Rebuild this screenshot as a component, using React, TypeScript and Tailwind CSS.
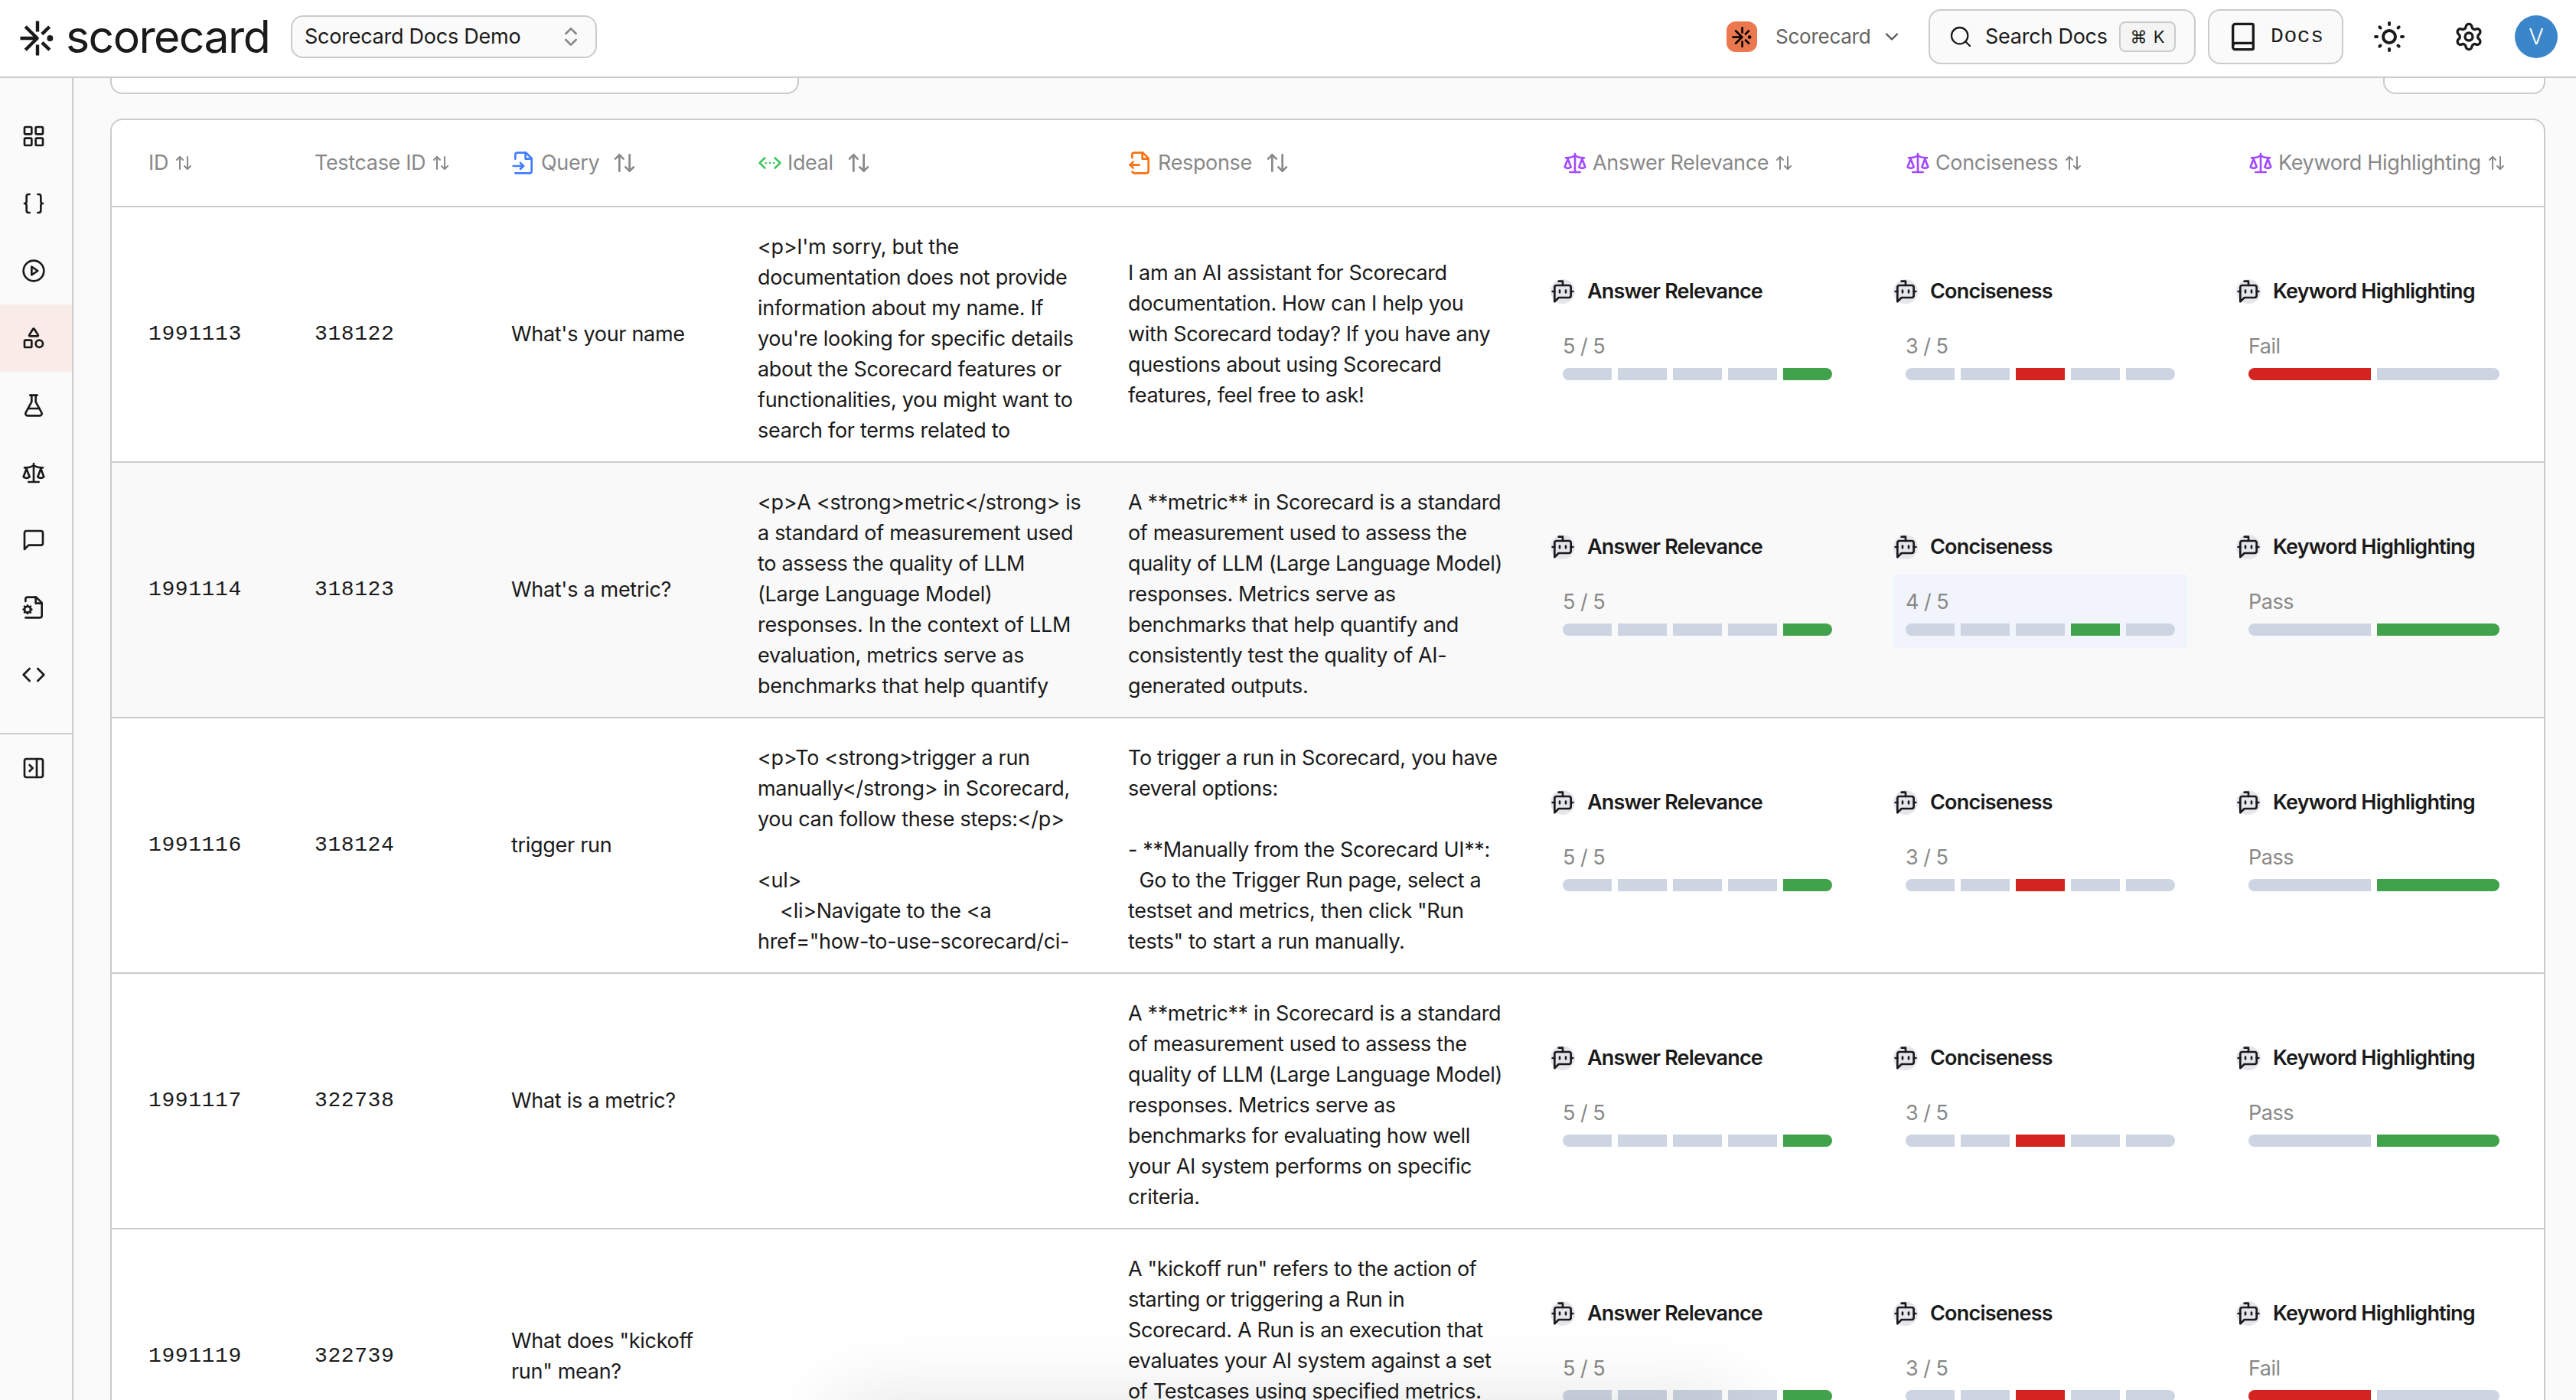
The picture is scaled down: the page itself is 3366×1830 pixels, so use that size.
import type { ReactNode } from "react";
import {
  ArrowUpDown,
  Braces,
  ChevronDown,
  ChevronsUpDown,
  Code,
  FlaskConical,
  LayoutGrid,
  PanelRightClose,
  Scale,
  Search,
  Settings,
} from "lucide-react";

type IconProps = { className?: string; children?: ReactNode };

/** 24-unit stroked icon frame shared by the hand-drawn icons. */
function Stroke({ className = "size-8", children }: IconProps) {
  return (
    <svg
      viewBox="0 0 24 24"
      className={`shrink-0 ${className}`}
      fill="none"
      stroke="currentColor"
      strokeWidth="2"
      strokeLinecap="round"
      strokeLinejoin="round"
    >
      {children}
    </svg>
  );
}

const PlayIcon = () => (
  <Stroke>
    <circle cx="12" cy="12" r="10" />
    <path d="M10 8l6 4-6 4z" />
  </Stroke>
);

const ShapesIcon = () => (
  <Stroke>
    <path d="M8.3 10a.7.7 0 0 1-.626-1.079L11.4 3a.7.7 0 0 1 1.198-.043L16.3 8.9a.7.7 0 0 1-.572 1.1Z" />
    <rect x="3" y="14" width="7" height="7" rx="1" />
    <circle cx="17.5" cy="17.5" r="3.5" />
  </Stroke>
);

const MessageIcon = () => (
  <Stroke>
    <path d="M21 15a2 2 0 0 1-2 2H7l-4 4V5a2 2 0 0 1 2-2h14a2 2 0 0 1 2 2z" />
  </Stroke>
);

const FileCogIcon = () => (
  <Stroke>
    <path d="M4 6V4a2 2 0 0 1 2-2h8.5L20 7.5V20a2 2 0 0 1-2 2H4" />
    <path d="M14 2v6h6" />
    <circle cx="6" cy="14" r="3" />
    <path d="M6 10v1M6 17v1M10 14H9M3 14H2M9 11l-.88.88M3.88 16.12 3 17M9 17l-.88-.88M3.88 11.88 3 11" />
  </Stroke>
);

const FileInputIcon = () => (
  <Stroke className="size-8 text-[#437eff]">
    <path d="M4 22h14a2 2 0 0 0 2-2V7.5L14.5 2H6a2 2 0 0 0-2 2v4" />
    <path d="M14 2v6h6" />
    <path d="M2 15h10" />
    <path d="m9 18 3-3-3-3" />
  </Stroke>
);

const FileOutputIcon = () => (
  <Stroke className="size-8 text-[#f97316]">
    <path d="M4 7V4a2 2 0 0 1 2-2h8.5L20 7.5V20a2 2 0 0 1-2 2H6a2 2 0 0 1-1.9-1.4" />
    <path d="M14 2v6h6" />
    <path d="M2 14h9" />
    <path d="m5 11-3 3 3 3" />
  </Stroke>
);

const IdealIcon = () => (
  <Stroke className="size-8 text-[#3ec45c]">
    <path d="m17 7 5 5-5 5" />
    <path d="m7 7-5 5 5 5" />
    <path d="M8.2 12h.01M12 12h.01M15.8 12h.01" />
  </Stroke>
);

const BotIcon = () => (
  <span className="flex size-8 shrink-0 rounded-full bg-[#e5e6eb]">
    <Stroke>
      <path d="M12 6V2H8" />
      <path d="m8 18-4 4V8a2 2 0 0 1 2-2h12a2 2 0 0 1 2 2v8a2 2 0 0 1-2 2Z" />
      <path d="M2 12h2M9 11v2M15 11v2M20 12h2" />
    </Stroke>
  </span>
);

const BookIcon = () => (
  <Stroke className="size-10">
    <path d="M4 19.5V4a2 2 0 0 1 2-2h13a1 1 0 0 1 1 1v18a1 1 0 0 1-1 1H6a2 2 0 0 1-2-2.5" />
    <path d="M4 19a2 2 0 0 1 2-2h14" />
  </Stroke>
);

const SunIcon = () => (
  <svg viewBox="0 0 40 40" className="size-10 shrink-0" fill="none" stroke="currentColor" strokeWidth="4" strokeLinecap="round">
    <circle cx="20" cy="20" r="8" />
    <path d="M20 2v2M20 36v2M2 20h2M36 20h2M7.3 7.3l1.2 1.2M31.5 31.5l1.2 1.2M7.3 32.7l1.2-1.2M31.5 8.5l1.2-1.2" />
  </svg>
);

function Burst({ className }: { className: string }) {
  return (
    <svg viewBox="0 0 44 46" className={`shrink-0 ${className}`} fill="none" stroke="currentColor" strokeWidth="4.4" strokeLinejoin="round">
      <path d="M23 .5v14M23 31.5v14M.5 23H23" />
      <path d="M7.2 7.8 22.6 23 7.2 38.2M38.6 8 28.8 17.6M38.9 38.2 29 28.6" />
      <circle cx="39.4" cy="23" r="4" fill="currentColor" stroke="none" />
    </svg>
  );
}

const NAV = [
  { name: "overview", icon: <LayoutGrid className="size-8" /> },
  { name: "prompts", icon: <Braces className="size-8" /> },
  { name: "playground", icon: <PlayIcon /> },
  { name: "testsets", icon: <ShapesIcon />, active: true },
  { name: "experiments", icon: <FlaskConical className="size-8" /> },
  { name: "metrics", icon: <Scale className="size-8" /> },
  { name: "feedback", icon: <MessageIcon /> },
  { name: "configs", icon: <FileCogIcon /> },
  { name: "api", icon: <Code className="size-8" /> },
];

type Result = { label: string; segments: number; hit: number; good: boolean; hover?: boolean };
const five = (n: number, hover = false): Result => ({ label: `${n} / 5`, segments: 5, hit: n - 1, good: n > 3, hover });
const pass: Result = { label: "Pass", segments: 2, hit: 1, good: true };
const fail: Result = { label: "Fail", segments: 2, hit: 0, good: false };

type Row = { id: string; testcase: string; query: string[]; ideal: string[]; response: string[]; results: Result[]; hover?: boolean };

const ROWS: Row[] = [
  {
    id: "1991113",
    testcase: "318122",
    query: ["What's your name"],
    ideal: [
      "<p>I'm sorry, but the",
      "documentation does not provide",
      "information about my name. If",
      "you're looking for specific details",
      "about the Scorecard features or",
      "functionalities, you might want to",
      "search for terms related to",
    ],
    response: [
      "I am an AI assistant for Scorecard",
      "documentation. How can I help you",
      "with Scorecard today? If you have any",
      "questions about using Scorecard",
      "features, feel free to ask!",
    ],
    results: [five(5), five(3), fail],
  },
  {
    id: "1991114",
    testcase: "318123",
    query: ["What's a metric?"],
    ideal: [
      "<p>A <strong>metric</strong> is",
      "a standard of measurement used",
      "to assess the quality of LLM",
      "(Large Language Model)",
      "responses. In the context of LLM",
      "evaluation, metrics serve as",
      "benchmarks that help quantify",
    ],
    response: [
      "A **metric** in Scorecard is a standard",
      "of measurement used to assess the",
      "quality of LLM (Large Language Model)",
      "responses. Metrics serve as",
      "benchmarks that help quantify and",
      "consistently test the quality of AI-",
      "generated outputs.",
    ],
    results: [five(5), five(4, true), pass],
    hover: true,
  },
  {
    id: "1991116",
    testcase: "318124",
    query: ["trigger run"],
    ideal: [
      "<p>To <strong>trigger a run",
      "manually</strong> in Scorecard,",
      "you can follow these steps:</p>",
      "",
      "<ul>",
      "    <li>Navigate to the <a",
      'href="how-to-use-scorecard/ci-',
    ],
    response: [
      "To trigger a run in Scorecard, you have",
      "several options:",
      "",
      "- **Manually from the Scorecard UI**:",
      "  Go to the Trigger Run page, select a",
      'testset and metrics, then click "Run',
      'tests" to start a run manually.',
    ],
    results: [five(5), five(3), pass],
  },
  {
    id: "1991117",
    testcase: "322738",
    query: ["What is a metric?"],
    ideal: [],
    response: [
      "A **metric** in Scorecard is a standard",
      "of measurement used to assess the",
      "quality of LLM (Large Language Model)",
      "responses. Metrics serve as",
      "benchmarks for evaluating how well",
      "your AI system performs on specific",
      "criteria.",
    ],
    results: [five(5), five(3), pass],
  },
  {
    id: "1991119",
    testcase: "322739",
    query: ['What does "kickoff', 'run" mean?'],
    ideal: [],
    response: [
      'A "kickoff run" refers to the action of',
      "starting or triggering a Run in",
      "Scorecard. A Run is an execution that",
      "evaluates your AI system against a set",
      "of Testcases using specified metrics.",
      "",
      "",
    ],
    results: [five(5), five(3), fail],
  },
];

const METRICS = ["Answer Relevance", "Conciseness", "Keyword Highlighting"];
const GRID = "grid grid-cols-[217px_257px_322px_484px_552px_448px_448px_1fr] pl-12";

/** Long passages hang from the top padding, short ones sit mid-row. */
function Passage({ lines, tracking = "" }: { lines: string[]; tracking?: string }) {
  return (
    <div className={`whitespace-pre ${tracking} ${lines.length > 6 ? "self-start pt-8" : "self-center"}`}>
      {lines.map((line, i) => (
        <p key={i} className="h-10">
          {line}
        </p>
      ))}
    </div>
  );
}

function Metric({ name, result, last }: { name: string; result: Result; last: boolean }) {
  return (
    <div className={`flex flex-col gap-4 self-center ${last ? "w-[360px]" : "w-96"}`}>
      <div className="flex items-center gap-4">
        <BotIcon />
        <span className="text-[27px] font-semibold tracking-[-0.8px] whitespace-nowrap">{name}</span>
      </div>
      <div className={`flex flex-col gap-2 p-4 ${result.hover ? "bg-[#f1f5fb]" : ""}`}>
        <span className="tracking-[-0.5px] text-[#888888]">{result.label}</span>
        <div className="flex h-4 gap-2 overflow-hidden rounded-full">
          {Array.from({ length: result.segments }, (_, i) => (
            <span
              key={i}
              className={`flex-1 ${i !== result.hit ? "bg-[#cdd5e2]" : result.good ? "bg-[#40a34b]" : "bg-[#d42420]"}`}
            />
          ))}
        </div>
      </div>
    </div>
  );
}

function Heading({ icon, label, big }: { icon?: ReactNode; label: string; big?: boolean }) {
  return (
    <div className="flex items-center tracking-[-0.35px] whitespace-nowrap">
      {icon && <span className="mr-[7px]">{icon}</span>}
      <span>{label}</span>
      {big ? <ArrowUpDown className="ml-[17px] size-8" /> : <ArrowUpDown className="ml-2 size-6" />}
    </div>
  );
}

function Header() {
  return (
    <header className="flex h-[102px] shrink-0 items-start justify-between border-b-2 border-[#cbcbcb] bg-white pr-6 pl-[26px]">
      <div className="flex h-24 items-center">
        <Burst className="mt-1 h-[46px] w-11" />
        <span className="ml-4 w-[270px] text-[59px] leading-[72px] tracking-[-1.6px]">scorecard</span>
        <div className="ml-6 flex h-14 w-[400px] items-center justify-between rounded-2xl border-2 border-[#cbcbcb] bg-[#fafafa] px-4">
          <span className="whitespace-nowrap">Scorecard Docs Demo</span>
          <ChevronsUpDown className="size-8 text-[#888888]" />
        </div>
      </div>
      <div className="flex h-24 items-center">
        <span className="flex size-10 items-center justify-center rounded-xl bg-[#ec784f] text-black">
          <Burst className="h-[27px] w-[26px]" />
        </span>
        <span className="ml-6 w-[120px] text-[26px] text-[#636363]">Scorecard</span>
        <ChevronDown className="ml-[18px] size-7 text-[#555555]" />
        <button className="ml-[34px] flex h-[72px] w-[349px] items-center rounded-2xl border-2 border-[#cbcbcb] bg-[#fafafa] px-6">
          <Search className="size-8" strokeWidth={1.7} />
          <span className="ml-4 whitespace-nowrap">Search Docs</span>
          <kbd className="ml-auto flex h-10 w-[74px] items-center justify-center gap-2 rounded-lg border-2 border-[#cbcbcb] bg-[#f4f4f4] font-[Inter,sans-serif] text-[22px] tracking-normal">
            <span>⌘</span>
            <span>K</span>
          </kbd>
        </button>
        <button className="ml-4 flex h-[72px] w-[177px] items-center rounded-2xl border-2 border-[#cbcbcb] bg-[#fafafa] pl-6">
          <BookIcon />
          <span className="ml-4 font-['Liberation_Mono',monospace] text-[28px] tracking-[0.6px]">Docs</span>
        </button>
        <span className="ml-10">
          <SunIcon />
        </span>
        <Settings className="ml-16 size-10" />
        <span className="ml-10 flex size-14 items-center justify-center rounded-full bg-[#3b86cb] text-[29px] font-light text-white">V</span>
      </div>
    </header>
  );
}

function Sidebar() {
  return (
    <nav className="flex w-24 shrink-0 flex-col border-r-2 border-[#cbcbcb] pt-8">
      {NAV.map((item) => (
        <div key={item.name} className={`flex h-[88px] items-center pl-7 ${item.active ? "bg-[#f9ebe7]" : ""}`}>
          {item.icon}
        </div>
      ))}
      <div className="mt-8 flex h-[90px] items-center border-t-2 border-[#cbcbcb] pl-7">
        <PanelRightClose className="size-8" />
      </div>
    </nav>
  );
}

export default function App() {
  return (
    <div className="relative flex h-[1830px] w-[3366px] flex-col overflow-hidden bg-[#fafafa] font-[Inter,'Liberation_Sans',sans-serif] text-[27px] leading-10 tracking-[-0.25px] text-[#1a1a1a]">
      <Header />
      <div className="flex min-h-0 flex-1">
        <Sidebar />
        <main className="flex min-w-0 flex-1 flex-col pr-10 pl-12">
          <div className="mb-8 flex shrink-0 justify-between">
            <div className="h-[21px] w-[900px] rounded-b-2xl border-2 border-t-0 border-[#cbcbcb] bg-white" />
            <div className="h-[21px] w-[212px] rounded-b-2xl border-2 border-t-0 border-[#cbcbcb] bg-white" />
          </div>
          <section className="shrink-0 overflow-hidden rounded-2xl border-2 border-[#cbcbcb] bg-white">
            <div className={`${GRID} h-[114px] items-center border-b-2 border-[#cbcbcb] text-[#888888]`}>
              <Heading label="ID" />
              <Heading label="Testcase ID" />
              <Heading icon={<FileInputIcon />} label="Query" big />
              <Heading icon={<IdealIcon />} label="Ideal" big />
              <Heading icon={<FileOutputIcon />} label="Response" big />
              {METRICS.map((m) => (
                <div key={m} className="pl-4">
                  <Heading icon={<Scale className="size-8 text-[#a24bff]" />} label={m} />
                </div>
              ))}
            </div>
            {ROWS.map((row) => (
              <div key={row.id} className={`${GRID} h-[334px] border-b-2 border-[#cbcbcb] ${row.hover ? "bg-[#f9f9f9]" : ""}`}>
                <span className="self-center font-['Liberation_Mono',monospace] text-[28px] tracking-[0.6px]">{row.id}</span>
                <span className="self-center font-['Liberation_Mono',monospace] text-[28px] tracking-[0.6px]">{row.testcase}</span>
                <Passage lines={row.query} tracking="tracking-[-0.3px]" />
                <Passage lines={row.ideal} tracking="tracking-[-0.3px]" />
                <Passage lines={row.response} tracking="tracking-[-0.36px]" />
                {METRICS.map((m, i) => (
                  <Metric key={m} name={m} result={row.results[i]} last={i === 2} />
                ))}
              </div>
            ))}
          </section>
        </main>
      </div>
      {/* soft shadow cast by the dock panel below the fold */}
      <div className="pointer-events-none absolute top-full left-[1090px] h-20 w-[1186px] shadow-[0_0_100px_rgba(0,0,0,0.12)]" />
    </div>
  );
}
